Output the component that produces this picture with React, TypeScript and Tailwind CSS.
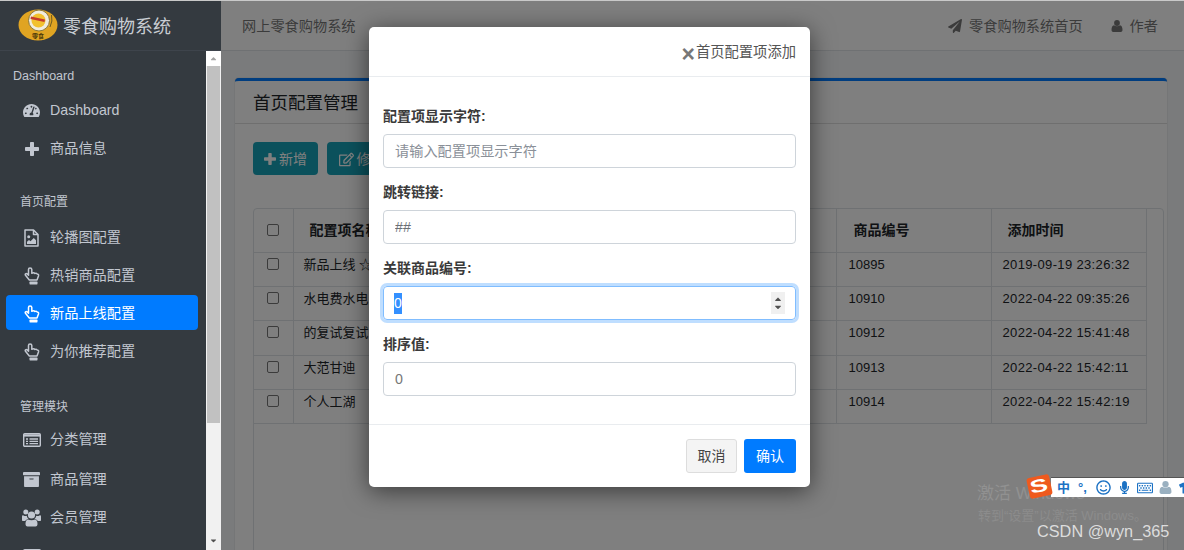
import React from "react";
import {
  FaTachometerAlt, FaArchive, FaPaperPlane, FaRegEdit, FaCaretUp, FaCaretDown, FaRegSmile, FaMicrophone, FaRegKeyboard, FaTshirt,
} from "react-icons/fa";

const font = { fontFamily: '"Liberation Sans","Noto Sans CJK SC",sans-serif' };

function PlusIcon({ size = 14 }: { size?: number }) {
  return (
    <svg width={size} height={size} viewBox="0 0 14 14" fill="currentColor">
      <path d="M5 .8c0-.4.3-.8.8-.8h2.4c.5 0 .8.4.8.8V5h4.2c.4 0 .8.3.8.8v2.4c0 .5-.4.8-.8.8H9v4.2c0 .4-.3.8-.8.8H5.800c-.5 0-.8-.4-.8-.8V9H.8C.4 9 0 8.700 0 8.200V5.800C0 5.300.4 5 .8 5H5z" />
    </svg>
  );
}

function HandIcon() {
  return (
    <svg width="16" height="18" viewBox="0 0 15 18" fill="none" stroke="currentColor" strokeWidth="1.5" strokeLinejoin="round">
      <path d="M5.500 1C4.500 1 4 1.800 4 2.600V8.200L2.700 6.900C1.600 6 .2 7 1 8.300L4.800 13H12.500L14 8.900C14.300 7.800 13.600 7 12.600 7C12.200 6 11 6 10.400 6.500C9.800 5.700 8.600 5.700 7.300 6.200V2.600C7.300 1.700 6.500 1 5.500 1Z" />
      <rect x="5" y="14.600" width="8" height="2.800" fill="currentColor" stroke="none" rx=".6" />
    </svg>
  );
}

function FileImageIcon() {
  return (
    <svg width="15" height="18" viewBox="0 0 15 18" fill="none" stroke="currentColor" strokeWidth="1.5" strokeLinejoin="round">
      <path d="M1 1H9.500L14 5.500V17H1Z" />
      <path d="M9.500 1V5.500H14" />
      <circle cx="4.700" cy="7.800" r="1.500" fill="currentColor" stroke="none" />
      <path d="M3 15V12.800L5 11L6.500 12.300L9.800 9L12 11.300V15Z" fill="currentColor" stroke="none" />
    </svg>
  );
}

function ListIcon() {
  return (
    <svg width="18" height="14" viewBox="0 0 18 14" fill="none" stroke="currentColor" strokeWidth="1.400">
      <rect x=".7" y=".7" width="16.600" height="12.600" rx="1" />
      <path d="M1 2.500H17" strokeWidth="2.200" />
      <path d="M3 6H5M3 8.300H5M3 10.600H5M6.500 6H15M6.500 8.300H15M6.500 10.600H15" strokeWidth="1.300" />
    </svg>
  );
}

function UsersIcon() {
  return (
    <svg width="19" height="18" viewBox="0 0 19 18" fill="currentColor">
      <circle cx="3.800" cy="3" r="2.500" />
      <circle cx="15.200" cy="3" r="2.500" />
      <circle cx="9.500" cy="6" r="3.600" />
      <path d="M0 7.500C0 6.500.8 6 1.500 6.400C2.500 7 3.700 7 4.800 6.700C5 8 5.500 9 6.500 10C4.800 10.300 3.800 11 3.200 12H1C.3 12 0 11.500 0 11Z" />
      <path d="M19 7.500C19 6.500 18.200 6 17.500 6.400C16.500 7 15.300 7 14.200 6.700C14 8 13.500 9 12.500 10C14.200 10.300 15.200 11 15.800 12H18C18.700 12 19 11.500 19 11Z" />
      <path d="M6 10.500C7.800 11.500 11.200 11.500 13 10.500C14.800 10.800 15.500 12.500 15.500 15C15.500 16.700 14.500 17.500 13.500 17.500H5.500C4.500 17.500 3.500 16.700 3.500 15C3.500 12.500 4.200 10.800 6 10.500Z" />
    </svg>
  );
}

function UserIcon({ size = 12, cls = "" }: { size?: number; cls?: string }) {
  return (
    <svg width={size} height={size} viewBox="0 0 12 12" fill="currentColor" className={cls}>
      <circle cx="6" cy="3" r="2.900" />
      <path d="M3 5.300C4.700 6.600 7.300 6.600 9 5.300C10.800 5.500 11.500 7.500 11.500 10C11.500 11.300 10.700 12 9.800 12H2.200C1.300 12 .5 11.300 .5 10C.5 7.500 1.200 5.500 3 5.300Z" />
    </svg>
  );
}

function NavItem({ icon, label, active, cls = "" }: { icon: React.ReactNode; label: string; active?: boolean; cls?: string }) {
  return (
    <div className={`ml-[6px] mr-[8px] h-[35px] mb-[3px] pt-[2px] flex items-center rounded-[4px] text-[14.2px] ${active ? "bg-[#007bff] text-white" : "text-[#c2c7d0]"} ${cls}`}>
      <span className="w-[44px] flex justify-center pl-[7px] text-[17px]">{icon}</span>
      <span>{label}</span>
    </div>
  );
}

function Sidebar() {
  return (
    <aside className="w-[221px] shrink-0 bg-[#343a40] flex flex-col overflow-hidden h-full relative z-10">
      <div className="h-[50px] shrink-0 flex items-center pl-[18px] border-b border-[#3e444c]">
        <svg width="40" height="32" viewBox="0 0 40 32" className="shrink-0 -mt-[2px]">
          <ellipse cx="20" cy="16" rx="19.500" ry="15.500" fill="#e0a422" />
          <circle cx="21" cy="11.500" r="10.500" fill="#f1ecdd" stroke="#8d7a3a" strokeWidth="1" />
          <circle cx="20.500" cy="11.500" r="7" fill="#f2c12e" />
          <path d="M13 7.500 L27 10.500 L26.500 13 L12.500 10 Z" fill="#c43a2c" />
          <path d="M33.500 6 Q35 12 32 18" stroke="#6d5a20" strokeWidth="1" fill="none" />
          <text x="20" y="29" textAnchor="middle" fontSize="6" fontWeight="bold" fill="#4a3708">零食</text>
        </svg>
        <span className="ml-[5px] mt-[3px] text-[18px] text-[#c9cdd3]">零食购物系统</span>
      </div>
      <div className="flex flex-1 min-h-0">
        <nav className="flex-1 min-w-0 overflow-hidden">
          <div className="pl-[13px] pt-[16px] h-[41px] text-[12.5px] text-[#c2c7d0] leading-[18px]">Dashboard</div>
          <NavItem icon={<FaTachometerAlt />} label="Dashboard" />
          <NavItem icon={<PlusIcon />} label="商品信息" />
          <div className="pl-[20px] pt-[25px] h-[51px] text-[12px] text-[#c2c7d0] leading-[18px]">首页配置</div>
          <NavItem icon={<FileImageIcon />} label="轮播图配置" />
          <NavItem icon={<HandIcon />} label="热销商品配置" />
          <NavItem icon={<HandIcon />} label="新品上线配置" active />
          <NavItem icon={<HandIcon />} label="为你推荐配置" />
          <div className="pl-[20px] pt-[27px] h-[52px] text-[12px] text-[#c2c7d0] leading-[18px]">管理模块</div>
          <NavItem icon={<ListIcon />} label="分类管理" cls="!mb-[5px] -mt-[2px]" />
          <NavItem icon={<FaArchive />} label="商品管理" />
          <NavItem icon={<UsersIcon />} label="会员管理" />
          <NavItem icon={<ListIcon />} label="" />
        </nav>
        <div className="w-[15px] shrink-0 bg-[#f1f1f1] flex flex-col items-center">
          <div className="h-[15px] w-full flex items-center justify-center text-[#a3a3a3] text-[9px] bg-white"><FaCaretUp /></div>
          <div className="h-[357px] w-[13px] bg-[#c1c1c1]" />
          <div className="flex-1" />
          <div className="h-[15px] w-full flex items-center justify-center text-[#505050] text-[9px] mb-[2px]"><FaCaretDown /></div>
        </div>
      </div>
    </aside>
  );
}

const rows = [
  ["新品上线 ☆", "10895", "2019-09-19 23:26:32"],
  ["水电费水电费", "10910", "2022-04-22 09:35:26"],
  ["的复试复试", "10912", "2022-04-22 15:41:48"],
  ["大范甘迪", "10913", "2022-04-22 15:42:11"],
  ["个人工湖", "10914", "2022-04-22 15:42:19"],
];

function Checkbox() {
  return <span className="block w-[12px] h-[12px] rounded-[2px] border border-[#767676] bg-white mx-auto" />;
}

function Main() {
  return (
    <main className="flex-1 min-w-0 h-full flex flex-col bg-[#f4f6f9] overflow-hidden">
      <header className="h-[50px] shrink-0 bg-white border-b border-[#dee2e6] pt-[2px] flex items-center justify-between pl-[21px] pr-[26px] text-[14.2px] text-[#777]">
        <span>网上零食购物系统</span>
        <div className="flex items-center">
          <FaPaperPlane className="text-[14px] mr-[7px]" />
          <span>零食购物系统首页</span>
          <UserIcon cls="ml-[28px] mr-[7px]" />
          <span>作者</span>
        </div>
      </header>
      <div className="flex-1 pl-[14px] pr-[17px] pt-[27px]">
        <section className="bg-white rounded-t-[4px] border-t-[3px] border-[#007bff] h-full shadow-[0_0_1px_rgba(0,0,0,0.4)]">
          <div className="h-[43px] border-b border-[#dfdfdf] flex items-center pt-[3px] pl-[18px] text-[17.500px] text-[#212529]">首页配置管理</div>
          <div className="pl-[18px] pr-[3px] pt-[18px]">
            <div className="flex gap-[9px] mb-[33px]">
              <button className="h-[33px] w-[65px] pt-[1px] rounded-[4px] bg-[#17a2b8] text-white text-[14px] flex items-center justify-center"><span className="mr-[3px]"><PlusIcon size={12} /></span>新增</button>
              <button className="h-[33px] w-[65px] pt-[1px] pl-[4px] rounded-[4px] bg-[#17a2b8] text-white text-[14px] flex items-center justify-center"><FaRegEdit className="text-[15px] mr-[3px]" />修改</button>
            </div>
            <div className="border border-[#dee2e6] rounded-t-[4px] h-[400px]">
              <table className="border-collapse text-[13px] text-[#212529] table-fixed w-[893px]">
                <thead>
                  <tr className="h-[43px] text-[14px]">
                    <th className="w-[39px] border-r border-b border-[#dee2e6]"><Checkbox /></th>
                    <th className="w-[543px] text-left pl-[16px] border-r border-b border-[#dee2e6] font-bold">配置项名称</th>
                    <th className="w-[155px] text-left pl-[17px] border-r border-b border-[#dee2e6] font-bold">商品编号</th>
                    <th className="text-left pl-[16px] border-r border-b border-[#dee2e6] font-bold">添加时间</th>
                  </tr>
                </thead>
                <tbody>
                  {rows.map((r) => (
                    <tr key={r[1]} className="h-[34.400px] align-top">
                      <td className="pt-[5px] border-r border-b border-[#dee2e6]"><Checkbox /></td>
                      <td className="pt-[2px] pl-[10px] leading-[20px] border-r border-b border-[#dee2e6]">{r[0]}</td>
                      <td className="pt-[2px] pl-[12px] leading-[20px] border-r border-b border-[#dee2e6]">{r[1]}</td>
                      <td className="pt-[2px] pl-[11px] leading-[20px] tracking-[0.35px] border-r border-b border-[#dee2e6]">{r[2]}</td>
                    </tr>
                  ))}
                </tbody>
              </table>
            </div>
          </div>
        </section>
      </div>
    </main>
  );
}

function Field({ label, children }: { label: string; children: React.ReactNode }) {
  return (
    <div className="mb-[15px]">
      <label className="block h-[18px] leading-[18px] mb-[9px] text-[14px] font-bold text-[#3a3a3a]">{label}:</label>
      {children}
    </div>
  );
}

const inputCls = "block w-full h-[34px] rounded-[4px] border border-[#ced4da] px-[11px] text-[14.200px] outline-none bg-white placeholder:text-[#8a9098]";

function Modal() {
  return (
    <div className="absolute left-[369px] top-[26px] w-[441px] h-[460px] z-30 bg-white rounded-[5px] shadow-[0_4px_24px_rgba(0,0,0,0.55)] flex flex-col">
      <div className="h-[50px] shrink-0 border-b border-[#e9ecef] pt-[3px] flex items-center justify-end pr-[14px] text-[14.300px] text-[#555]">
        <span className="text-[#777] text-[23px] font-bold leading-none mr-[1px] mt-[3px]">×</span>
        <span>首页配置项添加</span>
      </div>
      <div className="flex-1 px-[14px] pt-[30px]">
        <Field label="配置项显示字符">
          <input className={inputCls} placeholder="请输入配置项显示字符" readOnly />
        </Field>
        <Field label="跳转链接">
          <input className={`${inputCls} text-[#6a6f75]`} defaultValue="##" readOnly />
        </Field>
        <Field label="关联商品编号">
          <div className="relative h-[34px] rounded-[4px] border border-[#80bdff] shadow-[0_0_0_3px_rgba(0,123,255,0.25)] flex items-center pl-[10px] text-[14px] text-[#495057]">
            <span className="bg-[#3390ff] text-white h-[21px] leading-[21px]">0</span>
            <span className="absolute right-[10px] top-[5px] w-[14px] h-[22px] bg-[#f0f0f0] flex flex-col items-center justify-center text-[#505050] text-[10px] leading-none">
              <FaCaretUp className="-mb-[2px]" />
              <FaCaretDown />
            </span>
          </div>
        </Field>
        <Field label="排序值">
          <input className={`${inputCls} text-[#777]`} defaultValue="0" readOnly />
        </Field>
      </div>
      <div className="h-[63px] shrink-0 border-t border-[#e9ecef] flex items-start justify-end gap-[7px] pr-[14px] pt-[14px] text-[14px]">
        <button className="h-[34px] w-[51px] rounded-[3px] bg-[#f4f4f4] border border-[#dddddd] text-[#444]">取消</button>
        <button className="h-[34px] w-[52px] rounded-[3px] bg-[#007bff] text-white">确认</button>
      </div>
    </div>
  );
}

function Overlays() {
  return (
    <>
      <div className="absolute left-[977px] top-[482px] z-40 text-[#919191] text-[17px] leading-[22px]">激活 Windows</div>
      <div className="absolute left-[978px] top-[507px] z-40 text-[#8c8c8c] text-[13px] leading-[16px]">转到“设置”以激活 Windows。</div>
      <div className="absolute left-[1037px] top-[520px] z-50 text-[#dcdcdc] text-[16.300px] leading-[20px]">CSDN @wyn_365</div>
      <div className="absolute left-[1028px] top-[474px] z-50 flex items-center">
        <span className="w-[23px] h-[21px] rounded-[3px] bg-[#ef5a1e] text-white font-bold text-[18px] leading-[21px] text-center -rotate-12 relative z-10 shrink-0">
          <span className="inline-block scale-x-150">S</span>
        </span>
        <div className="h-[20px] w-[135px] mt-[2px] bg-white border-t border-[#555] flex items-center text-[#1c72c4] overflow-hidden shrink-0 pl-[6px]">
          <span className="font-bold text-[13px] leading-none w-[21px] shrink-0">中</span>
          <span className="text-[13px] font-bold leading-none w-[18px] shrink-0">°,</span>
          <FaRegSmile className="text-[15px] shrink-0 mr-[7px]" />
          <FaMicrophone className="text-[13px] shrink-0 mr-[6px]" />
          <FaRegKeyboard className="text-[16px] shrink-0 mr-[6px]" />
          <UserIcon size={13} cls="text-[#9ab0c0] shrink-0 mr-[7px]" />
          <FaTshirt className="text-[14px] shrink-0" />
        </div>
      </div>
    </>
  );
}

export default function App() {
  return (
    <div className="relative w-[1184px] h-[550px] overflow-hidden flex border-t border-[#c9c9c9]" style={font}>
      <Sidebar />
      <div className="relative flex-1 min-w-0 h-full">
        <Main />
        <div className="absolute inset-0 bg-black/50 z-20" />
      </div>
      <Modal />
      <Overlays />
    </div>
  );
}
